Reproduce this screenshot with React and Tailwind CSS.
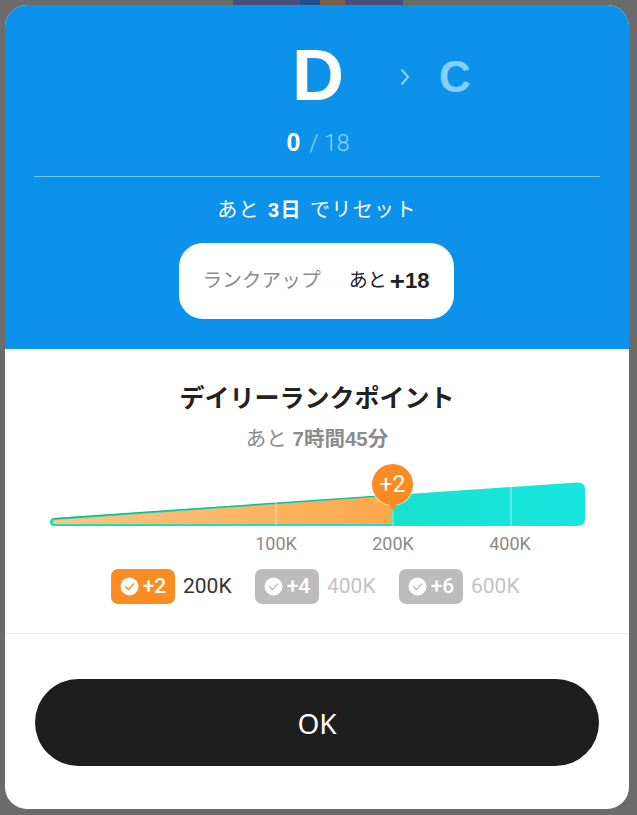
import React from 'react';

const jp = "font-['Liberation_Sans','Noto_Sans_CJK_JP',sans-serif]";

function CheckBadge({ value, active }) {
  return (
    <div className={`w-[64px] h-[35px] rounded-[7px] flex items-center justify-center gap-[4px] text-white ${active ? 'bg-[#fb8c23]' : 'bg-[#bcbcbc]'}`}>
      <svg width="19" height="19" viewBox="0 0 19 19">
        <circle cx="9.5" cy="9.5" r="9" fill="#fff" />
        <path d="M5.5 9.8l3 2.8 5-5.6" fill="none" stroke={active ? '#fb8c23' : '#bcbcbc'} strokeWidth="1.4" strokeLinecap="round" strokeLinejoin="round" />
      </svg>
      <span className="text-[21px] font-medium leading-none font-['Roboto',sans-serif]">{value}</span>
    </div>
  );
}

function Reward({ value, label, active }) {
  return (
    <div className="flex items-center gap-[8px]">
      <CheckBadge value={value} active={active} />
      <span className={`w-[50px] text-[21px] leading-none font-['Roboto',sans-serif] ${active ? 'text-[#333333]' : 'text-[#c4c4c4]'}`}>{label}</span>
    </div>
  );
}

function Chart() {
  return (
    <div className="relative h-[45px]">
      <svg width="535" height="45" viewBox="0 0 535 45" className="block">
        <defs>
          <linearGradient id="teal" x1="0" x2="1" y1="0" y2="0">
            <stop offset="0" stopColor="#1bdcae" />
            <stop offset="1" stopColor="#17e6e0" />
          </linearGradient>
          <linearGradient id="orange" x1="0" x2="1" y1="0" y2="0">
            <stop offset="0" stopColor="#fcc583" />
            <stop offset="1" stopColor="#fea84a" />
          </linearGradient>
        </defs>
        <path d="M4 36L527 0.5Q535 0 535 7V37Q535 44 527 44H4Q0 44 0 40Q0 36.3 4 36Z" fill="url(#teal)" />
        <path d="M5 38L342 14V42H5Q2.5 42 2.5 40Q2.5 38.2 5 38Z" fill="url(#orange)" />
        <path d="M4 36.6L342 13" fill="none" stroke="#12b98c" strokeWidth="1.2" />
        <path d="M226 18V44M343 10V44M461 3V44" stroke="#ffffff" strokeOpacity="0.55" strokeWidth="1" />
      </svg>
      {/* ピンはチャートの上に重なる */}
      <div className="absolute left-[322px] top-[-18px] flex flex-col items-center">
        <div className="w-[41px] h-[41px] rounded-full bg-[#fb8c23] ring-1 ring-white/60 flex items-center justify-center text-white text-[23px] leading-none font-['Roboto',sans-serif]">
          +2
        </div>
        <div className="w-0 h-0 mt-[-2px] border-x-[4px] border-x-transparent border-t-[8px] border-t-[#fb8c23]" />
      </div>
    </div>
  );
}

export default function App() {
  return (
    <div className={`w-[637px] h-[815px] bg-[#6b6b6b] overflow-hidden ${jp}`}>
      <div className="h-[5px] ml-[233px] w-[170px] bg-[#4a4f7c] flex pl-[67px]">
        <div className="w-[20px] bg-[#1f4f8c]" />
        <div className="w-[25px] bg-[#7a5f4a]" />
      </div>
      <div className="ml-[5px] w-[624px] h-[804px] rounded-[22px] overflow-hidden bg-white flex flex-col">
        <div className="h-[344px] bg-[#0d92ec] px-[29px] flex flex-col items-center">
          <div className="w-full h-[110px] relative">
            <span className="absolute left-[258px] top-[29px] text-[72px] leading-[82px] font-bold text-white">D</span>
            <svg className="absolute left-[365px] top-[62px]" width="12" height="20" viewBox="0 0 12 20">
              <path d="M2.5 2.5L9 10l-6.5 7.5" fill="none" stroke="#8ed4fb" strokeWidth="2" />
            </svg>
            <span className="absolute left-[405px] top-[47px] text-[44px] leading-[50px] font-bold text-[#84d0fa]">C</span>
          </div>
          <div className="h-[61px] flex items-baseline gap-[9px] pt-[11px] pl-[2px]">
            <span className="text-[25px] leading-[32px] font-bold text-white">0</span>
            <span className="text-[23px] leading-[32px] font-light text-[#8fd3fa] font-['Roboto',sans-serif]">/ 18</span>
          </div>
          <div className="w-[566px] h-[1px] bg-[#71c8f6]" />
          <div className="mt-[17px] h-[32px] flex items-center text-[20px] tracking-[1.4px] text-white">
            <span>あと</span>
            <span className="font-bold mx-[8px]">3日</span>
            <span>でリセット</span>
          </div>
          <div className="mt-[17px] mr-[2px] w-[275px] h-[76px] bg-white rounded-[24px] flex items-center justify-between px-[24px]">
            <span className="text-[19.7px] text-[#8c8c8c]">ランクアップ</span>
            <span className="flex items-center text-[19px] text-[#222222]">
              あと<span className="ml-[3px] text-[22px] font-bold flex items-center leading-none"><span className="text-[26px] leading-none">+</span>18</span>
            </span>
          </div>
        </div>

        <div className="flex-1 flex flex-col">
          <div className="pt-[32px] text-center text-[25px] leading-[34px] font-bold text-[#222222]">デイリーランクポイント</div>
          <div className="mt-[11px] text-center text-[20.5px] leading-[26px] text-[#8c8c8c]">
            あと <span className="font-bold">7時間45分</span>
          </div>
          <div className="mt-[30px] ml-[45px] w-[535px]">
            <Chart />
          </div>
          <div className="mt-[5px] ml-[231px] flex gap-[37px] text-[18px] leading-[24px] text-[#8a8a8a] font-['Roboto',sans-serif]">
            <span className="w-[80px] text-center">100K</span>
            <span className="w-[80px] text-center">200K</span>
            <span className="w-[80px] text-center">400K</span>
          </div>
          <div className="mt-[13px] ml-[106px] flex gap-[22px]">
            <Reward value="+2" label="200K" active />
            <Reward value="+4" label="400K" />
            <Reward value="+6" label="600K" />
          </div>
          <div className="mt-[29px] h-[1px] bg-[#e9e9e9]" />
          <div className="mt-[45px] mx-[30px] h-[87px] rounded-[44px] bg-[#1e1e1e] flex items-center justify-center text-white text-[28px] font-['Noto_Sans',sans-serif]">
            OK
          </div>
        </div>
      </div>
    </div>
  );
}
